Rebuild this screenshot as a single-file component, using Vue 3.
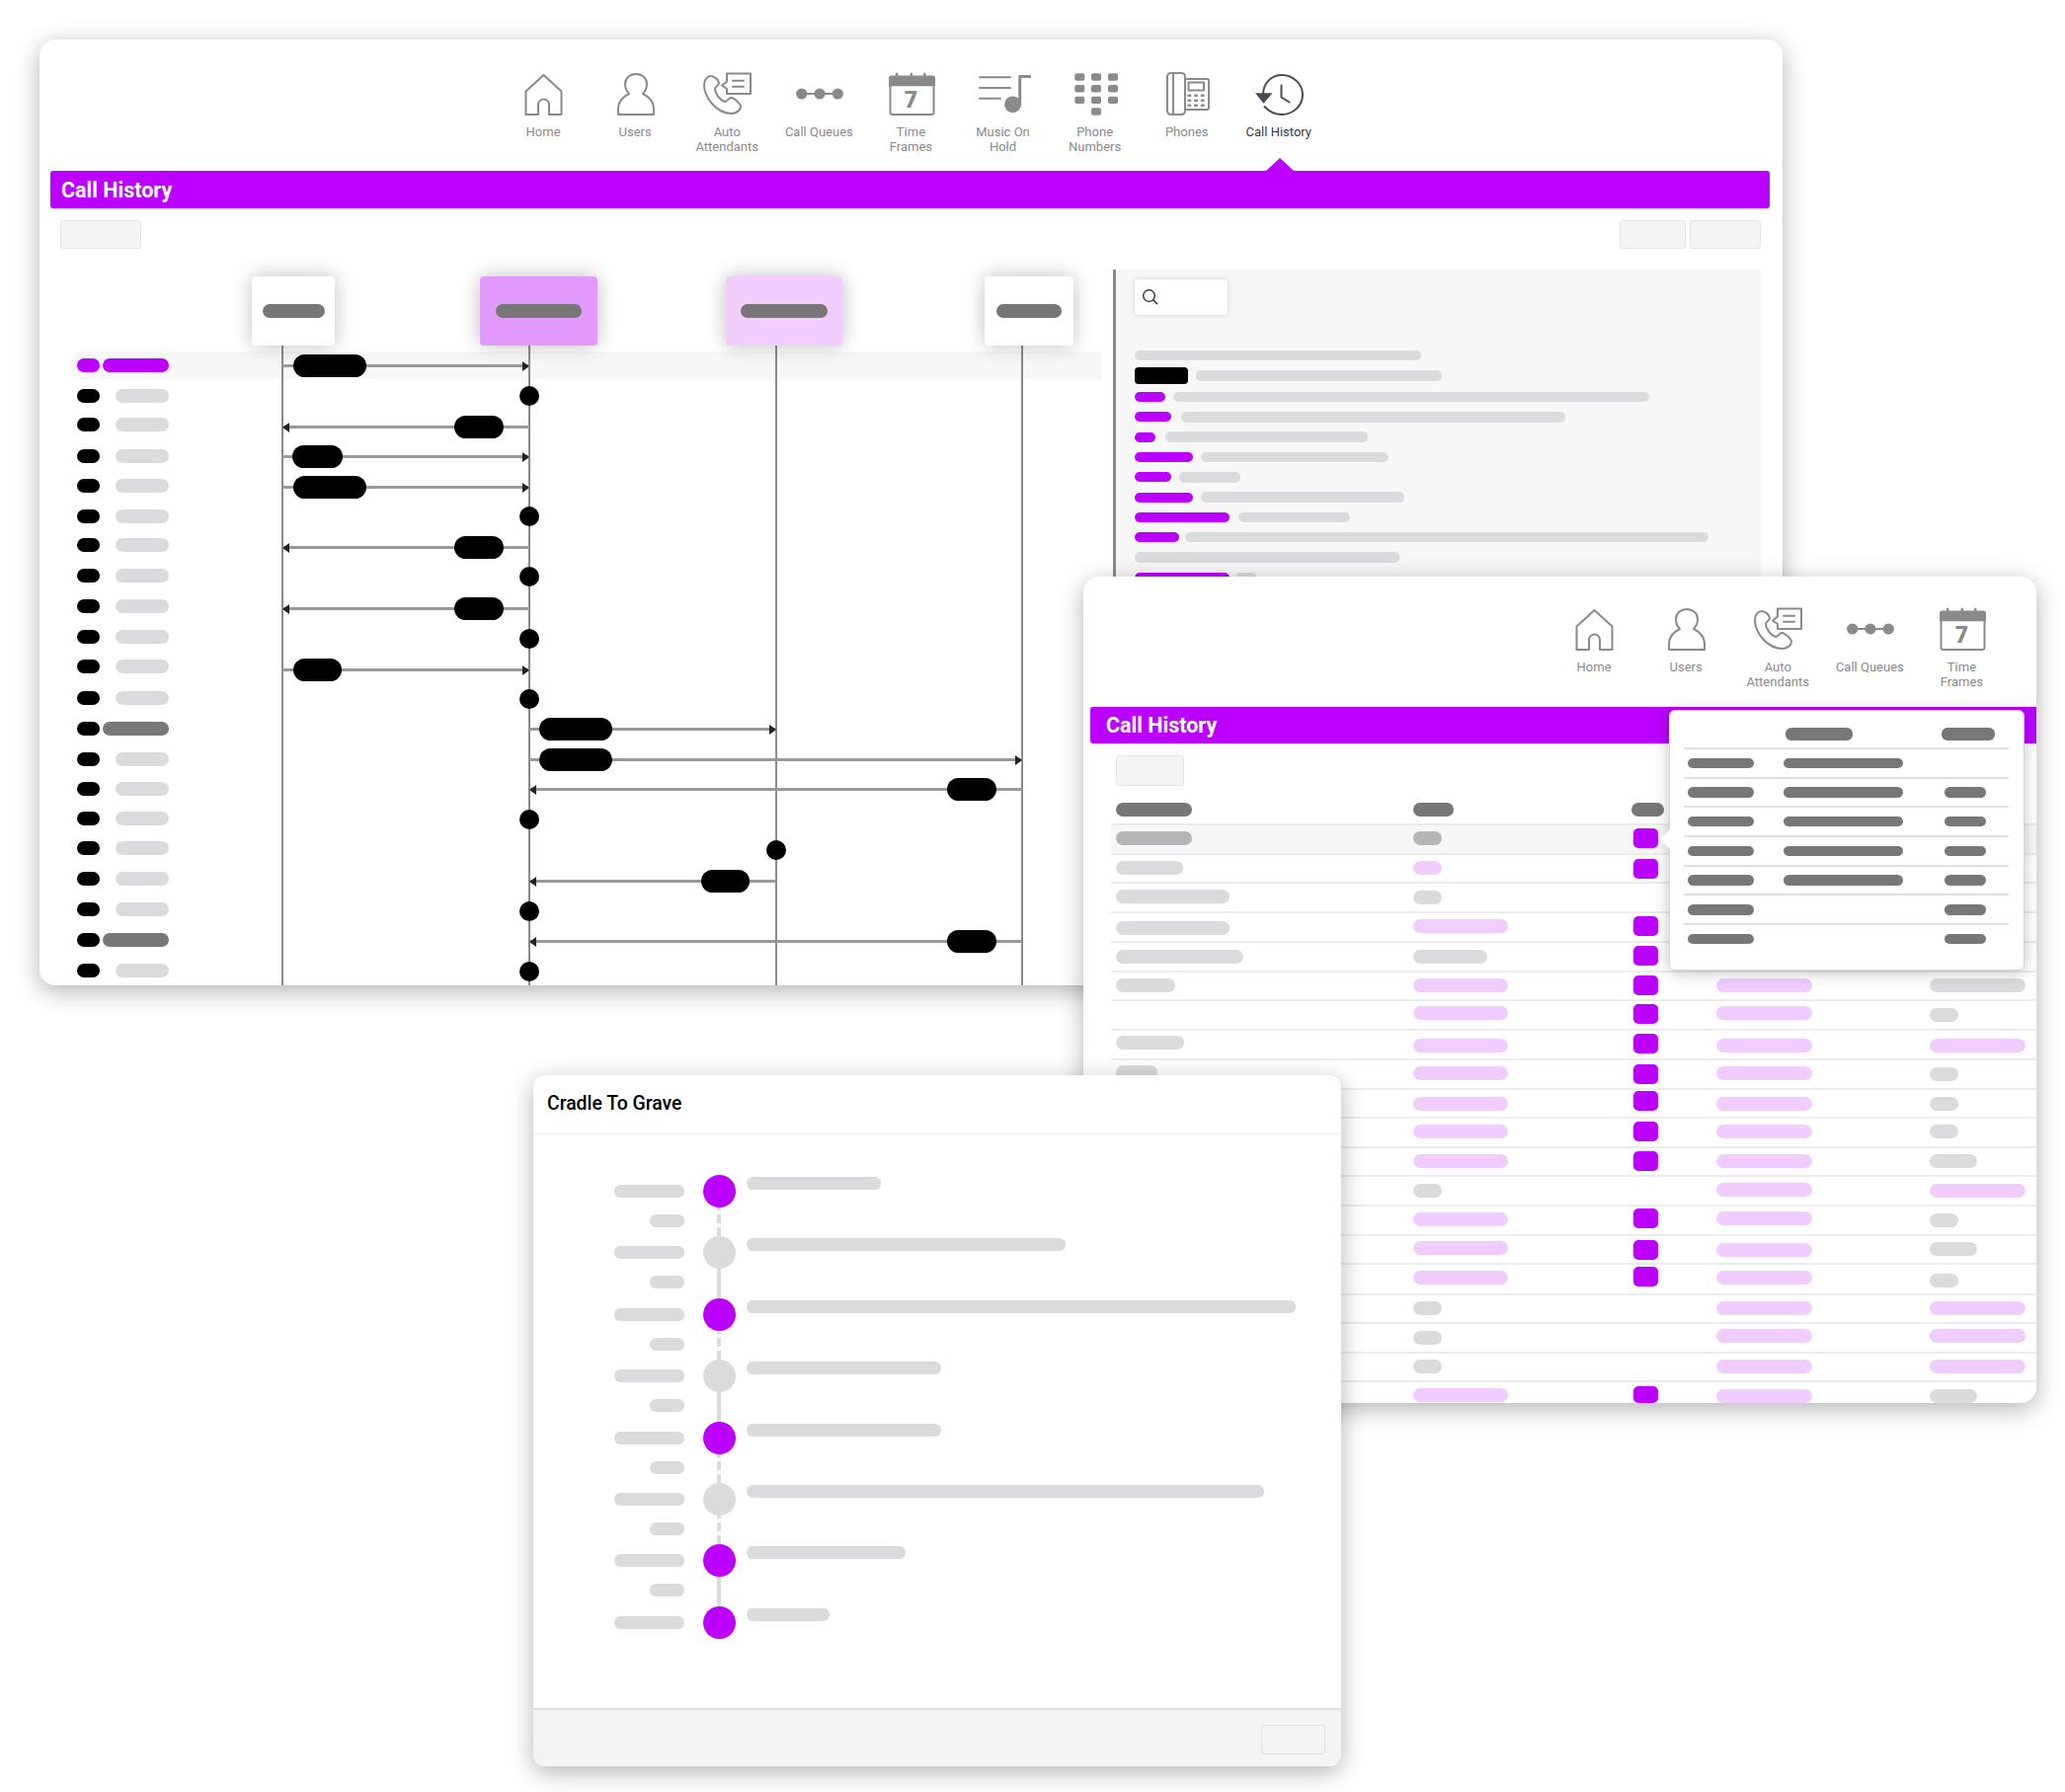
<script setup>
const G = '#8a8a8a'
const line = { fill: 'none', stroke: G, 'stroke-width': 2, 'stroke-linejoin': 'round', 'stroke-linecap': 'round' }
const solid = { fill: G }
const path = (d, a = line) => ({ tag: 'path', attrs: { d, ...a } })
const rect = (x, y, width, height, rx = 2) => ({ tag: 'rect', attrs: { x, y, width, height, rx, ...solid } })
const circle = (cx, cy, r) => ({ tag: 'circle', attrs: { cx, cy, r, ...solid } })

const dots = []
for (const y of [24.7, 29.7, 34.7]) for (const x of [30.3, 37, 43.7]) dots.push(rect(x - 2, y - 1.2, 4, 2.4, 1))

const nav = [
  { label: 'Home', shapes: [path('M10.5 44V20.5L28.5 4l18 16.5V44H34V34a5.5 5.5 0 0 0-11 0v10z')] },
  { label: 'Users', shapes: [path('M11 44v-6c0-8 5-12 11-15-3-3-4-7-4-10 0-6 5-10 11-10s11 4 11 10c0 3-1 7-4 10 6 3 11 7 11 15v6z')] },
  { label: 'Auto\nAttendants', shapes: [
    path('M12 5C8 5 5 9 5 14c0 12 12 29 28 29 5 0 9-4 9-7 0-3-6-8-9-9-3-1-4 4-7 4-5-1-10-9-10-13 0-3 4-3 4-6s-5-7-8-7z'),
    path('M28 2.500h24V23H28v-5l-5-3.500 5-4z'),
    path('M34 9.700h11M34 15.700h11')
  ] },
  { label: 'Call Queues', shapes: [path('M10 23h38'), circle(10.700, 23, 5.600), circle(29, 23, 5.600), circle(47.300, 23, 5.600)] },
  { label: 'Time\nFrames', shapes: [
    path('M7.500 15V42q0 2 2 2h40q2 0 2-2V15'),
    path('M6 15.300V7q0-2.500 2.500-2.500h42q2.500 0 2.500 2.500v8.300z', solid),
    rect(12.800, 1.500, 2.600, 4), rect(27.500, 1.500, 2.600, 4), rect(41, 1.500, 2.600, 4),
    { tag: 'text', text: '7', attrs: { x: 28.500, y: 37, 'text-anchor': 'middle', fill: G, 'font-size': 23, 'font-weight': 900, 'font-family': 'Roboto, sans-serif' } }
  ] },
  { label: 'Music On\nHold', shapes: [
    path('M4 6.300h31M4 17h31M4 27.700h21'),
    path('M44.700 34V5.500h10', { ...line, 'stroke-width': 3 }),
    { tag: 'ellipse', attrs: { cx: 37.500, cy: 33.800, rx: 8.400, ry: 8.400, ...solid } }
  ] },
  { label: 'Phone\nNumbers', shapes: [
    rect(7.300, 2.300, 10, 7.400), rect(24, 2.300, 10, 7.400), rect(41, 2.300, 10, 7.400),
    rect(7.300, 14, 10, 7.400), rect(24, 14, 10, 7.400), rect(41, 14, 10, 7.400),
    rect(7.300, 25.700, 10, 7.400), rect(24, 25.700, 10, 7.400), rect(41, 25.700, 10, 7.400),
    rect(24, 37.300, 10, 7.400)
  ] },
  { label: 'Phones', shapes: [
    path('M12 2h10q4 0 4 4v34q0 4-4 4H12q-4 0-4-4V6q0-4 4-4z'),
    path('M14 3v40'),
    path('M26 8h22q2 0 2 2v27q0 2-2 2H26'),
    path('M29.500 11.500h15.500v8H29.500z'),
    ...dots
  ] },
  { label: 'Call History', active: true, shapes: [
    path('M12 23C12.500 12 20.500 4 31 4c11.500 0 21 9 21 20s-9.500 20-21 20c-7 0-13-3-17.500-8', { ...line, stroke: '#4a4a55' }),
    path('M4 22.300h17.500l-9 10.500z', { fill: '#4a4a55' }),
    path('M30.500 14.500v12l8 5', { ...line, stroke: '#4a4a55' })
  ] }
]

/* Sequence diagram: coordinates are page pixels, converted to the diagram's origin */
const box = (x, y, w, h) => ({ left: `${x - 40}px`, top: `${y - 252}px`, width: `${w}px`, height: `${h}px` })

const actors = [
  { x: 255, w: 84, pillX: 266, pillW: 63, tone: 'white' },
  { x: 486, w: 119, pillX: 502, pillW: 87, tone: 'strong' },
  { x: 735, w: 118, pillX: 750, pillW: 88, tone: 'pale' },
  { x: 997, w: 90, pillX: 1009, pillW: 66, tone: 'white' }
]
const lifelines = [286, 536, 785.5, 1034.5]
const leftRows = [370, 401, 430, 462, 492, 523, 552, 583, 614, 645, 675, 707, 738, 769, 799, 829, 859, 890, 921, 952, 983]
  .map((y, i) => ({ y, kind: i === 0 ? 'sel' : i === 12 || i === 19 ? 'dark' : 'plain' }))
const arrows = [
  { from: 286, to: 536, y: 370, px: 297, pw: 74 },
  { from: 536, to: 286, y: 432, px: 460, pw: 50 },
  { from: 286, to: 536, y: 462, px: 296, pw: 51 },
  { from: 286, to: 536, y: 493, px: 297, pw: 74 },
  { from: 536, to: 286, y: 554, px: 460, pw: 50 },
  { from: 536, to: 286, y: 616, px: 460, pw: 50 },
  { from: 286, to: 536, y: 678, px: 297, pw: 49 },
  { from: 536, to: 785.5, y: 738, px: 546, pw: 74 },
  { from: 536, to: 1034.5, y: 769, px: 546, pw: 74 },
  { from: 1034.5, to: 536, y: 799, px: 959, pw: 50 },
  { from: 785.5, to: 536, y: 892, px: 710, pw: 49 },
  { from: 1034.5, to: 536, y: 953, px: 959, pw: 50 }
]
const events = [[536, 401], [536, 523], [536, 584], [536, 647], [536, 708], [536, 830], [785.5, 861], [536, 923], [536, 984]]

/* Details panel */
const panelRows = [
  { grey: 290, cls: 'first' },
  { lead: 54, tone: 'black', gap: 8, grey: 249, cls: 'tall' },
  { lead: 31, gap: 8, grey: 482 },
  { lead: 37, gap: 10, grey: 389 },
  { lead: 21, gap: 10, grey: 205 },
  { lead: 59, gap: 8, grey: 190 },
  { lead: 37, gap: 8, grey: 62 },
  { lead: 59, gap: 8, grey: 206 },
  { lead: 96, gap: 9, grey: 113 },
  { lead: 45, gap: 6, grey: 530 },
  { grey: 268 },
  { lead: 96, gap: 6, grey: 21 }
]

/* Table: row tops are the separator positions, pill offsets are measured inside each row */
const P = (w, y, k = '') => ({ w, y, k })
const rows = [
  { top: 834, sel: true, a: P(77, 842, 'mid'), b: P(29, 842, 'mid'), p: 839 },
  { top: 864, a: P(68, 872), b: P(29, 872, 'pink'), p: 870 },
  { top: 893, a: P(115, 901), b: P(29, 902) },
  { top: 923, a: P(115, 933), b: P(96, 931, 'pink'), p: 928 },
  { top: 953, a: P(129, 962), b: P(75, 962), p: 958 },
  { top: 983, a: P(60, 991), b: P(96, 991, 'pink'), p: 988, c: P(97, 991, 'pink'), e: P(97, 991) },
  { top: 1012, b: P(96, 1019, 'pink'), p: 1017, c: P(97, 1019, 'pink'), e: P(29, 1021) },
  { top: 1042, a: P(69, 1049), b: P(96, 1052, 'pink'), p: 1047, c: P(97, 1052, 'pink'), e: P(97, 1052, 'pink') },
  { top: 1072, a: P(42, 1079), b: P(96, 1080, 'pink'), p: 1078, c: P(97, 1080, 'pink'), e: P(29, 1081) },
  { top: 1102, b: P(96, 1111, 'pink'), p: 1105, c: P(97, 1111, 'pink'), e: P(29, 1111) },
  { top: 1131, b: P(96, 1139, 'pink'), p: 1136, c: P(97, 1139, 'pink'), e: P(29, 1139) },
  { top: 1161, b: P(96, 1169, 'pink'), p: 1166, c: P(97, 1169, 'pink'), e: P(48, 1169) },
  { top: 1190, b: P(29, 1199), c: P(97, 1198, 'pink'), e: P(97, 1199, 'pink') },
  { top: 1220, b: P(96, 1228, 'pink'), p: 1224, c: P(97, 1227, 'pink'), e: P(29, 1229) },
  { top: 1250, b: P(96, 1257, 'pink'), p: 1256, c: P(97, 1259, 'pink'), e: P(48, 1258) },
  { top: 1279, b: P(96, 1287, 'pink'), p: 1283, c: P(97, 1287, 'pink'), e: P(29, 1290) },
  { top: 1310, b: P(29, 1318), c: P(97, 1318, 'pink'), e: P(97, 1318, 'pink') },
  { top: 1339, b: P(29, 1348), c: P(97, 1346, 'pink'), e: P(97, 1346, 'pink') },
  { top: 1369, b: P(29, 1377), c: P(97, 1377, 'pink'), e: P(97, 1377, 'pink') },
  { top: 1398, b: P(96, 1406, 'pink'), p: 1404, ph: 17, c: P(97, 1407, 'pink'), e: P(48, 1407) }
].map((r, i, all) => ({ ...r, h: (all[i + 1] ? all[i + 1].top : 1423) - r.top }))
const cell = (r, p) => ({ width: `${p.w}px`, marginTop: `${p.y - r.top - 2}px` })
const flag = (r) => ({ marginTop: `${r.p - r.top - 2}px`, height: `${r.ph || 20}px` })

const popRows = [
  { a: 1, b: 1, c: 0 }, { a: 1, b: 1, c: 1 }, { a: 1, b: 1, c: 1 }, { a: 1, b: 1, c: 1 },
  { a: 1, b: 1, c: 1 }, { a: 1, b: 0, c: 1 }, { a: 1, b: 0, c: 1 }
]

/* Cradle to grave timeline */
const steps = [
  { on: true, w: 136, link: 'dash' },
  { on: false, w: 323, link: 'solid' },
  { on: true, w: 556, link: 'dash' },
  { on: false, w: 197, link: 'solid' },
  { on: true, w: 197, link: 'dash' },
  { on: false, w: 524, link: 'dash' },
  { on: true, w: 161, link: 'solid' },
  { on: true, w: 84, link: '' }
]
</script>

<template>
  <div class="stage">
    <!-- Window 1: call flow -->
    <section class="win win-flow">
      <nav class="nav nav-flow">
        <div v-for="n in nav" :key="n.label" class="nav-item" :class="{ active: n.active }">
          <svg class="nav-icon" width="56" height="48" viewBox="0 0 56 48">
            <component :is="s.tag" v-for="(s, i) in n.shapes" :key="i" v-bind="s.attrs">{{ s.text }}</component>
          </svg>
          <span class="nav-label">{{ n.label }}</span>
        </div>
      </nav>
      <h1 class="bar bar-flow">Call History</h1>
      <div class="tools tools-flow">
        <span class="btn btn-a"></span>
        <div class="tools-right">
          <span class="btn btn-b"></span>
          <span class="btn btn-c"></span>
        </div>
      </div>
      <div class="flow-body">
        <div class="diagram">
          <div class="row-sel" :style="box(71, 356, 1045, 28)"></div>
          <div v-for="x in lifelines" :key="x" class="lifeline" :style="box(x - 1, 350, 2, 648)"></div>
          <div v-for="a in actors" :key="a.x" class="actor" :class="a.tone" :style="box(a.x, 280, a.w, 70)">
            <span class="actor-pill" :style="{ width: a.pillW + 'px', marginLeft: a.pillX - a.x + 'px' }"></span>
          </div>
          <template v-for="r in leftRows" :key="r.y">
            <span class="chip" :class="r.kind === 'sel' ? 'c-purple' : 'c-black'" :style="box(78, r.y - 7, 23, 14)"></span>
            <span v-if="r.kind === 'plain'" class="chip c-grey" :style="box(117, r.y - 7, 54, 14)"></span>
            <span v-else class="chip" :class="r.kind === 'sel' ? 'c-purple' : 'c-dark'" :style="box(104, r.y - 7, 67, 14)"></span>
          </template>
          <template v-for="a in arrows" :key="a.y">
            <div class="arrow" :class="a.to > a.from ? 'right' : 'left'" :style="box(Math.min(a.from, a.to), a.y - 1, Math.abs(a.to - a.from), 3)"></div>
            <span class="msg" :style="box(a.px, a.y - 11, a.pw, 23)"></span>
          </template>
          <span v-for="e in events" :key="e[1]" class="event" :style="box(e[0] - 10, e[1] - 10, 20, 20)"></span>
        </div>
        <aside class="panel">
          <div class="search">
            <svg width="18" height="18" viewBox="0 0 18 18" fill="none" stroke="#222" stroke-width="1.300">
              <circle cx="7.500" cy="7.500" r="5.800" />
              <path d="M11.800 11.800L16 16" />
            </svg>
          </div>
          <div class="panel-list">
            <div v-for="(r, i) in panelRows" :key="i" class="panel-row" :class="r.cls">
              <span v-if="r.lead" class="lead" :class="r.tone" :style="{ width: r.lead + 'px', marginRight: r.gap + 'px' }"></span>
              <span class="grey" :style="{ width: r.grey + 'px' }"></span>
            </div>
          </div>
        </aside>
      </div>
    </section>

    <!-- Window 2: call table with popover -->
    <section class="win win-table">
      <nav class="nav nav-table">
        <div v-for="n in nav.slice(0, 5)" :key="n.label" class="nav-item">
          <svg class="nav-icon" width="56" height="48" viewBox="0 0 56 48">
            <component :is="s.tag" v-for="(s, i) in n.shapes" :key="i" v-bind="s.attrs">{{ s.text }}</component>
          </svg>
          <span class="nav-label">{{ n.label }}</span>
        </div>
      </nav>
      <h1 class="bar bar-table">Call History</h1>
      <div class="tools tools-table"><span class="btn btn-t"></span></div>
      <div class="table">
        <div class="thead">
          <span class="th th-a"></span>
          <span class="th th-b"></span>
          <span class="th th-c"></span>
        </div>
        <div v-for="r in rows" :key="r.top" class="tr" :class="{ sel: r.sel }" :style="{ height: r.h + 'px' }">
          <div><span v-if="r.a" class="cellpill" :class="r.a.k" :style="cell(r, r.a)"></span></div>
          <div><span v-if="r.b" class="cellpill" :class="r.b.k" :style="cell(r, r.b)"></span></div>
          <div><span v-if="r.p" class="flag" :style="flag(r)"></span></div>
          <div><span v-if="r.c" class="cellpill" :class="r.c.k" :style="cell(r, r.c)"></span></div>
          <div><span v-if="r.e" class="cellpill" :class="r.e.k" :style="cell(r, r.e)"></span></div>
        </div>
      </div>
      <div class="popover">
        <span class="caret"></span>
        <div class="pop-head">
          <span class="pop-pill ph-b"></span>
          <span class="pop-pill ph-c"></span>
        </div>
        <div v-for="(r, i) in popRows" :key="i" class="pop-row">
          <span><i v-if="r.a" class="pop-pill pa"></i></span>
          <span><i v-if="r.b" class="pop-pill pb"></i></span>
          <span><i v-if="r.c" class="pop-pill pc"></i></span>
        </div>
      </div>
    </section>

    <!-- Window 3: cradle to grave dialog -->
    <section class="win win-dialog">
      <header class="dlg-head">Cradle To Grave</header>
      <div class="dlg-body">
        <div v-for="(s, i) in steps" :key="i" class="step">
          <div class="when">
            <span class="when-big"></span>
            <span v-if="i < steps.length - 1" class="when-small"></span>
          </div>
          <div class="node-col">
            <span class="node" :class="{ on: s.on }"></span>
            <span v-if="s.link" class="link" :class="s.link"></span>
          </div>
          <span class="step-text" :style="{ width: s.w + 'px' }"></span>
        </div>
      </div>
      <footer class="dlg-foot"><span class="foot-btn"></span></footer>
    </section>
  </div>
</template>

<style>
html, body { margin: 0; background: #fff; }
</style>

<style scoped>
.stage {
  position: relative;
  width: 2091px;
  height: 1815px;
  overflow: hidden;
  background: #fff;
  font-family: Roboto, "Liberation Sans", sans-serif;
}
.win {
  position: absolute;
  display: flex;
  flex-direction: column;
  background: #fff;
  border-radius: 16px;
  overflow: hidden;
  box-shadow: 0 6px 24px rgba(0, 0, 0, 0.3);
}
.win-flow { left: 40px; top: 40px; width: 1765px; height: 958px; }
.win-table { left: 1097px; top: 584px; width: 965px; height: 837px; }
.win-dialog { left: 540px; top: 1089px; width: 818px; height: 700px; border-radius: 12px; }

.nav { display: flex; box-sizing: border-box; flex: none; }
.nav-flow { height: 133px; padding: 32px 0 0 463.500px; }
.nav-table { height: 132px; padding: 30px 0 0 470.500px; }
.nav-item { width: 93.100px; display: flex; flex-direction: column; align-items: center; }
.nav-icon { flex: none; display: block; }
.nav-label {
  margin-top: 6px;
  font-size: 13px;
  line-height: 15px;
  color: #8a8a8a;
  text-align: center;
  white-space: pre-line;
}
.nav-item.active .nav-label { color: #3a3a44; }

.bar {
  position: relative;
  flex: none;
  margin: 0;
  background: #bb00ff;
  color: #fff;
  font-size: 21.500px;
  font-weight: 700;
  box-sizing: border-box;
  display: flex;
  align-items: center;
  border-radius: 3px;
}
.bar-flow { height: 38px; width: 1741px; margin-left: 11px; padding-left: 11px; }
.bar-flow::after {
  content: "";
  position: absolute;
  left: 1231px;
  top: -13px;
  border-left: 14px solid transparent;
  border-right: 14px solid transparent;
  border-bottom: 13px solid #bb00ff;
}
.bar-table { height: 37px; margin-left: 7px; padding-left: 16px; border-radius: 3px 0 0 3px; }

.tools { display: flex; justify-content: space-between; flex: none; box-sizing: border-box; }
.tools-flow { padding: 12px 22px 0 21px; height: 41px; }
.tools-right { display: flex; gap: 4px; }
.tools-table { padding: 12px 0 0 33px; height: 43px; }
.btn {
  display: block;
  box-sizing: border-box;
  background: #f5f5f5;
  border: 1px solid #e4e4e4;
  border-radius: 3px;
}
.btn-a { width: 82px; height: 29px; }
.btn-b { width: 67px; height: 29px; }
.btn-c { width: 72px; height: 29px; }
.btn-t { width: 69px; height: 31px; }

.flow-body { display: flex; flex: 1; min-height: 0; }
.diagram { position: relative; width: 1087px; flex: none; }
.row-sel { position: absolute; background: #f7f7f7; border-radius: 14px 0 0 14px; }
.lifeline { position: absolute; background: #8a8a8a; }
.actor {
  position: absolute;
  box-sizing: border-box;
  display: flex;
  align-items: center;
  border-radius: 4px;
  box-shadow: 0 0 20px rgba(0, 0, 0, 0.26);
}
.actor.white { background: #fff; }
.actor.strong { background: #e29bfc; }
.actor.pale { background: #f0ccff; }
.actor-pill { display: block; height: 14px; border-radius: 7px; background: #777; }
.chip { position: absolute; border-radius: 7px; }
.c-purple { background: #bb00ff; }
.c-black { background: #000; }
.c-grey { background: #dbdbdd; }
.c-dark { background: #777; }
.arrow { position: absolute; background: #999; }
.arrow::after {
  content: "";
  position: absolute;
  top: -3.500px;
  border-top: 5px solid transparent;
  border-bottom: 5px solid transparent;
}
.arrow.right::after { right: 0; border-left: 7px solid #222; }
.arrow.left::after { left: 0; border-right: 7px solid #222; }
.msg { position: absolute; background: #000; border-radius: 12px; }
.event { position: absolute; background: #000; border-radius: 50%; }

.panel {
  width: 656px;
  margin-top: 21px;
  flex: none;
  box-sizing: border-box;
  background: #f7f7f7;
  border-left: 3px solid #8a8a8a;
  padding: 10px 0 0 19px;
}
.search {
  width: 94px;
  height: 36px;
  box-sizing: border-box;
  padding: 9px 0 0 7px;
  background: #fff;
  border-radius: 3px;
  box-shadow: 0 0 5px rgba(0, 0, 0, 0.16);
}
.search svg { display: block; }
.panel-list { margin-top: 32px; }
.panel-row { display: flex; align-items: center; height: 20.300px; }
.panel-row.first { height: 18px; }
.panel-row.tall { height: 23px; }
.lead { display: block; height: 10px; border-radius: 5px; background: #bb00ff; }
.lead.black { height: 17px; border-radius: 4px; background: #000; }
.grey { display: block; height: 10.500px; border-radius: 5px; background: #dbdbdd; }

.table { flex: none; padding-left: 28px; }
.thead { display: grid; grid-template-columns: 301px 221px 82px; height: 38px; padding-left: 5px; align-content: start; padding-top: 17px; box-sizing: border-box; }
.th { display: block; height: 14px; border-radius: 7px; background: #777; }
.th-a { width: 77px; }
.th-b { width: 41px; }
.th-c { width: 33px; }
.tr {
  display: grid;
  grid-template-columns: 301px 223px 83.500px 216.500px 1fr;
  padding-left: 5px;
  box-sizing: border-box;
  border-top: 2px solid #ececec;
  overflow: hidden;
}
.tr.sel { background: #f7f7f7; }
.cellpill { display: block; height: 14px; border-radius: 7px; background: #dbdbdd; }
.cellpill.mid { background: #b5b5b8; }
.cellpill.pink { background: #f0ccff; }
.flag { display: block; width: 25px; border-radius: 5px; background: #bb00ff; }

.popover {
  position: absolute;
  left: 593px;
  top: 135px;
  width: 360px;
  height: 264px;
  box-sizing: border-box;
  padding: 0 15px 0 14px;
  background: #fff;
  border: 1px solid #d5d5d5;
  border-radius: 6px;
  box-shadow: 0 2px 16px rgba(0, 0, 0, 0.24);
}
.caret {
  position: absolute;
  left: -10px;
  top: 120px;
  border-top: 10px solid transparent;
  border-bottom: 10px solid transparent;
  border-right: 10px solid #fff;
}
.pop-head { display: flex; height: 37px; padding: 17px 0 0 103px; box-sizing: border-box; }
.pop-pill { display: block; height: 13px; border-radius: 6px; background: #777; }
.ph-b { width: 68px; }
.ph-c { width: 54px; margin-left: 90px; }
.pop-row {
  display: grid;
  grid-template-columns: 97px 163px 1fr;
  align-items: center;
  height: 29.700px;
  padding-left: 4px;
  box-sizing: border-box;
  border-top: 2px solid #e0e0e0;
}
.pa, .pb, .pc { height: 10.500px; }
.pa { width: 67px; }
.pb { width: 121px; }
.pc { width: 42px; }

.dlg-head {
  flex: none;
  height: 60px;
  box-sizing: border-box;
  padding: 17px 0 0 14px;
  font-size: 19.400px;
  line-height: 24px;
  font-weight: 500;
  color: #000;
  border-bottom: 1px solid #eee;
}
.dlg-body { flex: 1; padding: 41px 0 0 0; min-height: 0; }
.step { display: flex; height: 62.400px; }
.when { width: 152.500px; flex: none; display: flex; flex-direction: column; align-items: flex-end; }
.when-big { display: block; width: 71px; height: 13px; margin-top: 10px; border-radius: 6px; background: #dbdbdd; }
.when-small { display: block; width: 35px; height: 13px; margin-top: 17px; border-radius: 6px; background: #dbdbdd; }
.node-col { position: relative; width: 63.500px; flex: none; }
.node { position: absolute; left: 19px; top: 0; width: 33px; height: 33px; border-radius: 50%; background: #dbdbdd; z-index: 1; }
.node.on { background: #bb00ff; }
.link { position: absolute; left: 33.500px; top: 33px; width: 4px; height: 29.400px; }
.link.solid { background: #dbdbdd; }
.link.dash {
  background: repeating-linear-gradient(#dbdbdd 0 9px, transparent 9px 13px);
  background-size: 100% 13px;
  background-position: 0 7px;
}
.step-text { display: block; height: 13px; margin-top: 2px; border-radius: 6px; background: #dbdbdd; }
.dlg-foot {
  flex: none;
  height: 59px;
  box-sizing: border-box;
  padding: 15px 16px 0 0;
  display: flex;
  justify-content: flex-end;
  align-items: flex-start;
  background: #f4f4f4;
  border-top: 2px solid #dedede;
}
.foot-btn { display: block; width: 65px; height: 30px; box-sizing: border-box; border: 1px solid #e0e0e0; border-radius: 3px; }
</style>
